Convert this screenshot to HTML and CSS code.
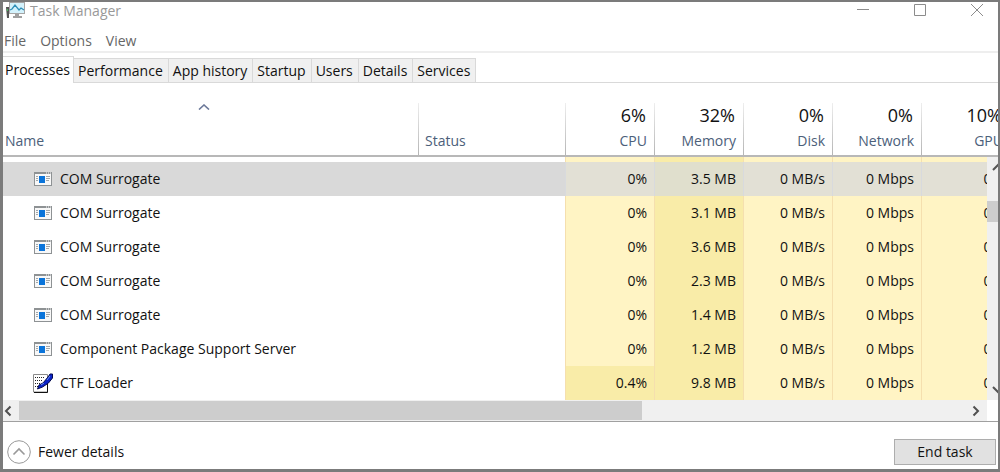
FILE: index.html
```html
<!DOCTYPE html>
<html lang="en">
  <head>
    <meta charset="UTF-8" />
    <title>Task Manager</title>
    <link rel="stylesheet" href="styles.css">
  </head>
  <body>
    <!-- Shared icons -->
    <svg class="sprite" aria-hidden="true">
      <symbol id="icon-app" viewBox="0 0 18 14">
        <rect x="0.5" y="0.5" width="17" height="13" fill="#f8f8f8" stroke="#8e9294" />
        <path d="M0 1h18" stroke="#8e9294" stroke-width="2" />
        <path d="M12 1h1M14 1h1M16 1h1" stroke="#fff" />
        <rect x="5" y="4" width="6" height="7" fill="#0a74da" />
        <path d="M2 4.5h2M2 6.5h2M2 8.5h2M12 4.5h4M12 6.5h4M12 8.5h3" stroke="#a3a7a9" />
      </symbol>
      <symbol id="icon-ctf" viewBox="0 0 20 20">
        <path d="M0.500 1.500h14v17.500h-14z" fill="#fff" stroke="#8a8a8a" />
        <path d="M14.500 10v9.500H1" stroke="#111" />
        <path d="M2 4.5h10M2 7.500h8M2 10.500h5M2 13.500h3" stroke="#222" stroke-dasharray="1 1" />
        <path d="M4.500 16l1.500-4 4-2 5-6 2-3 2.500 0v4l-4 5-6 4z" fill="#0a22c8" stroke="#040a50" />
        <path d="M8 12l3-2M14 7l3-4" stroke="#6f95f5" />
      </symbol>
    </svg>

    <main class="window">
      <header class="titlebar">
        <svg class="logo" viewBox="0 0 20 17" aria-hidden="true">
          <path d="M0 5h3v11H1z" fill="#555" />
          <path d="M1 7h1v2H1z" fill="#3fbf5a" />
          <rect x="3.5" y="0.5" width="15" height="11" fill="#d3f2fc" stroke="#a5a5a5" />
          <path d="M4 8l2-1 3-4 4 5 2-2 3 2" stroke="#2f8fb8" stroke-width="1.3" />
          <path d="M9 12h4v2h3v2H7v-2h2z" fill="#a0a0a0" />
        </svg>
        <h1 class="title">Task Manager</h1>
        <div class="window-controls">
          <button type="button" aria-label="Minimize"><svg viewBox="0 0 14 14"><path d="M1 6.500h12" /></svg></button>
          <button type="button" aria-label="Maximize"><svg viewBox="0 0 14 14"><path d="M1.5 1.5h11v11h-11z" /></svg></button>
          <button type="button" aria-label="Close"><svg viewBox="0 0 14 14"><path d="M1 1l12 12M13 1L1 13" /></svg></button>
        </div>
      </header>

      <nav class="menubar">
        <button type="button">File</button>
        <button type="button">Options</button>
        <button type="button">View</button>
      </nav>

      <div class="tabs" role="tablist">
        <button type="button" class="tab active" role="tab" aria-selected="true">Processes</button>
        <button type="button" class="tab" role="tab">Performance</button>
        <button type="button" class="tab" role="tab">App history</button>
        <button type="button" class="tab" role="tab">Startup</button>
        <button type="button" class="tab" role="tab">Users</button>
        <button type="button" class="tab" role="tab">Details</button>
        <button type="button" class="tab" role="tab">Services</button>
      </div>

      <section class="process-list">
        <table class="processes">
          <colgroup>
            <col>
            <col class="col-status">
            <col class="col-metric" span="5">
          </colgroup>
          <thead>
            <tr>
              <th class="name">
                <svg class="sort" viewBox="0 0 12 6" aria-hidden="true"><path d="M1 5.5l5-4.500 5 4.500" stroke-width="1.600" /></svg>
                Name
              </th>
              <th>Status</th>
              <th class="metric"><strong>6%</strong>CPU</th>
              <th class="metric"><strong>32%</strong>Memory</th>
              <th class="metric"><strong>0%</strong>Disk</th>
              <th class="metric"><strong>0%</strong>Network</th>
              <th class="metric"><strong>10%</strong>GPU</th>
            </tr>
          </thead>
          <tbody>
            <tr class="partial">
              <td></td><td></td>
              <td class="metric"></td><td class="metric warm"></td><td class="metric"></td><td class="metric"></td><td class="metric"></td>
            </tr>
            <tr class="selected">
              <td class="name"><svg class="icon"><use href="#icon-app" /></svg>COM Surrogate</td><td></td>
              <td class="metric">0%</td><td class="metric warm">3.5 MB</td><td class="metric">0 MB/s</td><td class="metric">0 Mbps</td><td class="metric">0%</td>
            </tr>
            <tr>
              <td class="name"><svg class="icon"><use href="#icon-app" /></svg>COM Surrogate</td><td></td>
              <td class="metric">0%</td><td class="metric warm">3.1 MB</td><td class="metric">0 MB/s</td><td class="metric">0 Mbps</td><td class="metric">0%</td>
            </tr>
            <tr>
              <td class="name"><svg class="icon"><use href="#icon-app" /></svg>COM Surrogate</td><td></td>
              <td class="metric">0%</td><td class="metric warm">3.6 MB</td><td class="metric">0 MB/s</td><td class="metric">0 Mbps</td><td class="metric">0%</td>
            </tr>
            <tr>
              <td class="name"><svg class="icon"><use href="#icon-app" /></svg>COM Surrogate</td><td></td>
              <td class="metric">0%</td><td class="metric warm">2.3 MB</td><td class="metric">0 MB/s</td><td class="metric">0 Mbps</td><td class="metric">0%</td>
            </tr>
            <tr>
              <td class="name"><svg class="icon"><use href="#icon-app" /></svg>COM Surrogate</td><td></td>
              <td class="metric">0%</td><td class="metric warm">1.4 MB</td><td class="metric">0 MB/s</td><td class="metric">0 Mbps</td><td class="metric">0%</td>
            </tr>
            <tr>
              <td class="name"><svg class="icon"><use href="#icon-app" /></svg>Component Package Support Server</td><td></td>
              <td class="metric">0%</td><td class="metric warm">1.2 MB</td><td class="metric">0 MB/s</td><td class="metric">0 Mbps</td><td class="metric">0%</td>
            </tr>
            <tr>
              <td class="name"><svg class="icon large"><use href="#icon-ctf" /></svg>CTF Loader</td><td></td>
              <td class="metric warm">0.4%</td><td class="metric warm">9.8 MB</td><td class="metric">0 MB/s</td><td class="metric">0 Mbps</td><td class="metric">0%</td>
            </tr>
          </tbody>
        </table>
        <div class="scroll-y">
          <button type="button" aria-label="Scroll up"><svg viewBox="0 0 12 8"><path d="M1 7l5-5 5 5" /></svg></button>
          <div class="thumb"></div>
          <button type="button" aria-label="Scroll down"><svg viewBox="0 0 12 8"><path d="M1 1l5 5 5-5" /></svg></button>
        </div>
      </section>

      <div class="scroll-x">
        <button type="button" aria-label="Scroll left"><svg viewBox="0 0 8 12"><path d="M6.500 1.500L2 6l4.500 4.500" /></svg></button>
        <div class="track"><div class="thumb"></div></div>
        <button type="button" class="next" aria-label="Scroll right"><svg viewBox="0 0 8 12"><path d="M1.500 1.500L6 6l-4.500 4.500" /></svg></button>
      </div>

      <footer class="footer">
        <button type="button" class="details-toggle">
          <svg viewBox="0 0 24 24" aria-hidden="true">
            <circle cx="12" cy="12" r="11.300" />
            <path d="M6.500 14.500l5.500-5.500 5.500 5.500" stroke-width="1.600" />
          </svg>
          Fewer details
        </button>
        <button type="button" class="end-task">End task</button>
      </footer>
    </main>
  </body>
</html>
```

FILE: styles.css
```css
:root {
  --frame: #7b7b7b;
  --line: #d9d9d9;
  --panel: #f0f0f0;
  --thumb: #cdcdcd;
  --heading: #4c607a;
  --heat-low: #fff4c4;
  --heat-high: #f9eca8;
  --metric-width: 89px;
}

* {
  box-sizing: border-box;
}

body {
  margin: 0;
  font-family: "Open Sans", "Noto Sans", sans-serif;
  font-size: 14px;
  line-height: 20px;
  color: #111;
}

button {
  font: inherit;
  color: inherit;
  background: none;
  border: 0;
  padding: 0;
}

svg {
  display: block;
  fill: none;
}

.sprite {
  position: absolute;
  width: 0;
  height: 0;
}

.window {
  min-height: 100vh;
  display: flex;
  flex-direction: column;
  overflow: hidden;
  background: #fff;
  border: solid var(--frame);
  border-width: 2px 2px 3px 3px;
}

/* Title bar and menu */
.titlebar {
  display: flex;
  align-items: flex-start;
  height: 28px;
  padding-left: 3px;
  color: #999;
}

.logo {
  width: 20px;
  height: 17px;
}

.title {
  margin: 0 0 0 4px;
  font-size: 14px;
  line-height: 18px;
  font-weight: 400;
}

.window-controls {
  display: flex;
  gap: 43px;
  margin-left: auto;
  padding: 1px 14px 0 0;
}

.window-controls svg {
  width: 14px;
  height: 14px;
  stroke: #8c8c8c;
}

.menubar {
  display: flex;
  gap: 14px;
  height: 23px;
  padding: 1px 1px 0;
  border-bottom: 2px solid #eee;
  color: #666;
}

/* Tabs */
.tabs {
  display: flex;
  align-items: flex-end;
  height: 30px;
  border-bottom: 1px solid var(--line);
}

.tab {
  height: 24px;
  padding: 1px 5px 0 4px;
  background: var(--panel);
  border: 1px solid var(--line);
  border-width: 1px 1px 0 0;
}

.tab.active {
  height: 27px;
  margin-bottom: -1px;
  padding: 0 3px 1px 2px;
  background: #fff;
}

/* Process table */
.process-list {
  position: relative;
  overflow: hidden;
}

.processes {
  width: calc(100% + 12px);
  table-layout: fixed;
  border-collapse: separate;
  border-spacing: 0;
}

.col-status {
  width: 147px;
}

.col-metric {
  width: var(--metric-width);
}

th {
  height: 74px;
  padding: 0 7px 4px;
  vertical-align: bottom;
  text-align: left;
  font-weight: 400;
  color: var(--heading);
  background: linear-gradient(#eee, #b5b5b5) left bottom / 1px 52px no-repeat;
  border-bottom: 2px solid #b8b8b8;
}

th.name {
  padding-left: 2px;
  padding-right: 16px;
  background: none;
}

th strong {
  display: block;
  margin: 0 1px 4px 0;
  font-size: 18px;
  line-height: 24px;
  font-weight: 400;
  color: #111;
}

.sort {
  width: 12px;
  height: 6px;
  margin: 0 auto 21px;
  stroke: #6b7899;
}

td {
  height: 34px;
  padding: 0;
  white-space: nowrap;
}

td.name {
  padding-left: 30px;
}

.metric {
  padding-right: 7px;
  text-align: right;
}

td.metric {
  background: var(--heat-low);
  border-left: 1px solid #f5dfae;
}

td.warm {
  background: var(--heat-high);
}

.partial td {
  height: 5px;
}

.selected td {
  background: #d9d9d9;
}

.selected td.metric {
  background: #e2e0d5;
  border-left-color: #d8dadd;
}

.selected td.warm {
  background: #e0dfcd;
}

.icon {
  display: inline-block;
  width: 18px;
  height: 14px;
  margin: 0 8px 0 1px;
  vertical-align: -2px;
}

.icon.large {
  width: 20px;
  height: 20px;
  margin: 0 7px 0 0;
  vertical-align: -5px;
}

/* Scroll bars */
.scroll-y {
  position: absolute;
  top: 74px;
  right: -6px;
  bottom: 0;
  width: 17px;
  display: flex;
  flex-direction: column;
  justify-content: space-between;
  padding: 6px 0 6px 5px;
  background: var(--panel);
}

.scroll-y svg {
  width: 12px;
  height: 8px;
  stroke: #555;
  stroke-width: 2;
}

.scroll-y .thumb {
  height: 21px;
  margin: 30px 0 auto -5px;
  background: var(--thumb);
}

.scroll-x {
  display: flex;
  align-items: center;
  height: 21px;
  margin-right: 11px;
  background: var(--panel);
}

.scroll-x button {
  width: 16px;
  padding-left: 1px;
}

.scroll-x .next {
  width: 24px;
  padding-left: 9px;
}

.scroll-x svg {
  width: 8px;
  height: 12px;
  stroke: #505050;
  stroke-width: 2;
}

.track {
  flex: 1;
}

.scroll-x .thumb {
  width: 66%;
  height: 19px;
  background: var(--thumb);
}

/* Footer */
.footer {
  flex: 1;
  display: flex;
  align-items: center;
  justify-content: space-between;
  padding: 14px 2px 2px 4px;
  border-top: 1px solid #a0a0a0;
}

.details-toggle {
  display: flex;
  align-items: center;
  gap: 7px;
}

.details-toggle svg {
  width: 24px;
  height: 24px;
  stroke: #999;
}

.end-task {
  width: 102px;
  height: 26px;
  background: #e1e1e1;
  border: 1px solid #adadad;
}
```
